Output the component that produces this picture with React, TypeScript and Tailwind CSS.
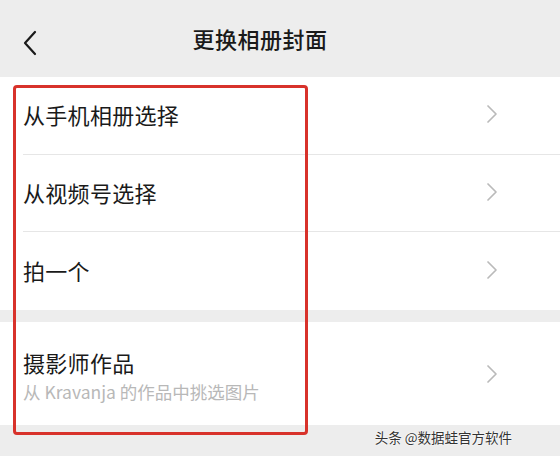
export default function App() {
  const rows = ['从手机相册选择', '从视频号选择', '拍一个']

  const Chevron = () => (
    <svg width="12" height="20" viewBox="0 0 12 20" className="shrink-0">
      <polyline points="2,2 10,10 2,18" fill="none" stroke="#bababa" strokeWidth="1.7" strokeLinecap="round" strokeLinejoin="round" />
    </svg>
  )

  return (
    <div
      className="relative w-[560px] h-[456px] bg-[#ededed] overflow-hidden text-[#1a1a1a]"
      style={{ fontFamily: '"Noto Sans CJK SC", "Noto Sans", sans-serif' }}
    >
      {/* Header */}
      <div className="relative h-[77px] flex items-center justify-center pr-[40px] pb-[2px]">
        <svg width="16" height="26" viewBox="0 0 16 26" className="absolute left-[22px] top-[30px]">
          <polyline points="13,2 3,13 13,24" fill="none" stroke="#1a1a1a" strokeWidth="2.2" strokeLinecap="round" strokeLinejoin="round" />
        </svg>
        <h1 className="text-[22px] font-medium leading-none tracking-[0.5px]">更换相册封面</h1>
      </div>

      {/* First group */}
      <div className="bg-white">
        {rows.map((label, i) => (
          <div key={label} className="pl-[23px]">
            <div
              className={`flex items-center justify-between pr-[62px] pb-[3px] ${i === 1 ? 'h-[77px]' : 'h-[78px]'} ${i < 2 ? 'border-b border-[#e6e6e6]' : ''}`}
            >
              <span className="text-[22px] leading-none tracking-[0.3px]">{label}</span>
              <Chevron />
            </div>
          </div>
        ))}
      </div>

      {/* Second group */}
      <div className="mt-[12px] bg-white h-[103px] pl-[23px] pr-[62px] flex items-center justify-between">
        <div className="flex flex-col gap-[10px] pt-[4px]">
          <span className="text-[22px] leading-none tracking-[0.3px]">摄影师作品</span>
          <span className="text-[17.5px] leading-none text-[#b8b8b8]">从 Kravanja 的作品中挑选图片</span>
        </div>
        <Chevron />
      </div>

      {/* Highlight box */}
      <div className="absolute left-[13px] top-[85px] w-[295px] h-[350px] border-[3px] border-[#d8322b] rounded-[4px]" />

      {/* Watermark */}
      <div
        className="absolute right-[48px] bottom-[12px] text-[13.5px] leading-none text-[#333]"
        style={{ textShadow: '0 0 2px #fff, 0 0 2px #fff' }}
      >
        头条 @数据蛙官方软件
      </div>
    </div>
  )
}
